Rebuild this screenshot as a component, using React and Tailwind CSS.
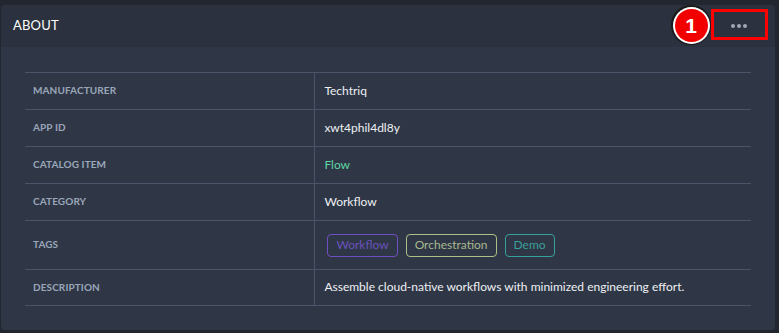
import React from 'react';

const rows = [
  { label: 'Manufacturer', value: 'Techtriq' },
  { label: 'App ID', value: 'xwt4phil4dl8y' },
  { label: 'Catalog Item', value: 'Flow', accent: true },
  { label: 'Category', value: 'Workflow' },
  { label: 'Tags', tags: true },
  { label: 'Description', value: 'Assemble cloud-native workflows with minimized engineering effort.' },
];

const tags = [
  { name: 'Workflow', cls: 'border-[#6f4fc4] text-[#6a52bd]' },
  { name: 'Orchestration', cls: 'border-[#aebf86] text-[#a6b88e]' },
  { name: 'Demo', cls: 'border-[#36a09b] text-[#3a9f99]' },
];

const App = () => {
  return (
    <div className="w-[779px] h-[333px] bg-[#22272f] pt-[5px] pl-[1px] pr-[4px] font-['Lato','Noto_Sans',sans-serif]">
      <div className="relative rounded-[4px] overflow-hidden bg-[#2f3746] h-[325px]">
        {/* header */}
        <div className="h-[42px] bg-[#2b313e] flex items-center pl-3 pr-2">
          <span className="text-[13px] text-white tracking-[0.2px]">ABOUT</span>
          <div className="ml-auto w-[56px] h-[29px] flex items-center justify-center gap-[2px]">
            <span className="w-[4px] h-[4px] rounded-full bg-[#a0a8b6]" />
            <span className="w-[4px] h-[4px] rounded-full bg-[#a0a8b6]" />
            <span className="w-[4px] h-[4px] rounded-full bg-[#a0a8b6]" />
          </div>
        </div>

        {/* body */}
        <div className="px-6 pt-[25px]">
          {rows.map((row, i) => (
            <div
              key={row.label}
              className={`flex border-t border-[#4a5569] ${i === rows.length - 1 ? 'border-b' : ''} ${
                row.tags ? 'h-[49px]' : 'h-[37px]'
              }`}
            >
              <div className="w-[40%] border-r border-[#4a5569] flex items-center pl-2 pb-[1px]">
                <span className="text-[10px] font-bold uppercase text-[#9aa6b9] tracking-[0.1px]">{row.label}</span>
              </div>
              <div className="flex-1 flex items-center pl-[9px] pb-[1px]">
                {row.tags ? (
                  <div className="flex gap-2 pl-[3px] pt-[1px]">
                    {tags.map((t) => (
                      <span
                        key={t.name}
                        className={`h-[23px] px-[8px] flex items-center rounded-[4px] border text-[12px] ${t.cls}`}
                      >
                        {t.name}
                      </span>
                    ))}
                  </div>
                ) : (
                  <span className={`text-[12px] ${row.accent ? 'text-[#5fd6a4]' : 'text-[#eef0f4]'}`}>{row.value}</span>
                )}
              </div>
            </div>
          ))}
        </div>
      </div>

      {/* annotation overlay */}
      <div className="absolute left-[671px] top-[5px] w-[40px] h-[40px] rounded-full bg-[#1a1a1a] flex items-center justify-center">
        <div className="w-[37px] h-[37px] rounded-full bg-white flex items-center justify-center">
          <div className="w-[33px] h-[33px] rounded-full bg-[#f20000] flex items-center justify-center">
            <span className="text-white font-bold text-[21px] leading-none font-['Liberation_Sans',sans-serif]">1</span>
          </div>
        </div>
      </div>
      <div className="absolute left-[711px] top-[9px] w-[57px] h-[31px] border-[3px] border-[#ff0000]" />
    </div>
  );
};

export default App;
